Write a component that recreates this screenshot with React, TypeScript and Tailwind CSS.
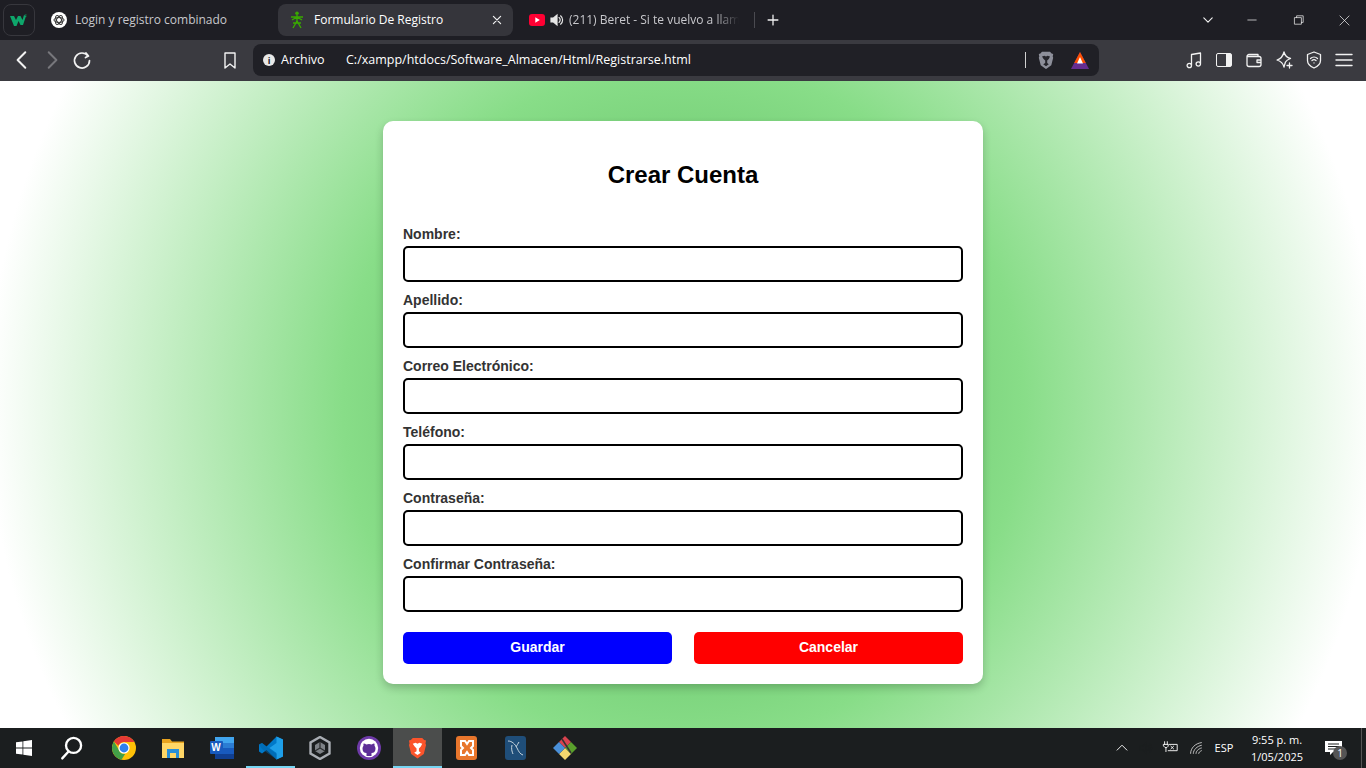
import type { ReactNode } from "react";

const fields = ["Nombre:", "Apellido:", "Correo Electrónico:", "Teléfono:", "Contraseña:", "Confirmar Contraseña:"];

const uiFont = "font-['Open_Sans','Noto_Sans',sans-serif]";
const pageFont = "font-['Liberation_Sans',Arial,sans-serif]";

function Cell({ w, children, className = "" }: { w: string; children?: ReactNode; className?: string }) {
  return <div className={`flex h-full shrink-0 items-center justify-center ${w} ${className}`}>{children}</div>;
}

function Line({ d, size = 20, color = "#f2f2f2", width = 1.6 }: { d: string; size?: number; color?: string; width?: number }) {
  return (
    <svg width={size} height={size} viewBox="0 0 20 20" fill="none" stroke={color} strokeWidth={width} strokeLinecap="round" strokeLinejoin="round">
      <path d={d} />
    </svg>
  );
}

function W3Logo() {
  return (
    <svg width="18" height="14" viewBox="0 0 18 14">
      <path d="M0 3h4l2 4 2-4h2.5l2 4 1.5-5 2 1-3 9h-2.5L8.5 8l-2 5H4z" fill="#0ea66b" />
      <text x="14.5" y="4" fontSize="4" fill="#0ea66b">3</text>
    </svg>
  );
}

function GptLogo() {
  return (
    <svg width="16" height="16" viewBox="0 0 16 16">
      <circle cx="8" cy="8" r="8" fill="#fff" />
      <g fill="none" stroke="#333" strokeWidth="1">
        <ellipse cx="8" cy="8" rx="5" ry="2.4" />
        <ellipse cx="8" cy="8" rx="5" ry="2.4" transform="rotate(60 8 8)" />
        <ellipse cx="8" cy="8" rx="5" ry="2.4" transform="rotate(120 8 8)" />
      </g>
    </svg>
  );
}

function SenaLogo() {
  return (
    <svg width="14" height="18" viewBox="0 0 14 18" fill="none" stroke="#39a900" strokeWidth="1.4">
      <circle cx="7" cy="2.2" r="1.8" fill="#39a900" stroke="none" />
      <path d="M1 6h12M7 4v6M2 9l5-3 5 3M7 10l-4 7M7 10l4 7M3 12h8" />
    </svg>
  );
}

function YouTube() {
  return (
    <svg width="16" height="12" viewBox="0 0 16 12">
      <rect width="16" height="12" rx="3" fill="#ff0033" />
      <path d="M6.3 3.3v5.4L10.8 6z" fill="#fff" />
    </svg>
  );
}

function Speaker({ color = "#e6e6e6" }: { color?: string }) {
  return (
    <svg width="14" height="14" viewBox="0 0 14 14" fill="none" stroke={color} strokeWidth="1.2" strokeLinecap="round">
      <path d="M1 5h2.5L7 2v10L3.5 9H1z" fill={color} />
      <path d="M9 4.6a3 3 0 0 1 0 4.8M10.6 2.8a5.4 5.4 0 0 1 0 8.4" />
    </svg>
  );
}

function BraveLion({ size = 16, mono = false }: { size?: number; mono?: boolean }) {
  const body = mono ? "#8d8f9a" : "#fb542b";
  const detail = mono ? "#25252b" : "#ffffff";
  return (
    <svg width={size} height={size * 1.15} viewBox="0 0 20 23">
      <path d="M5 1h10l2 2.2 2 .6-.6 3 .6 1.7-2.4 9.3L10 22.6 3.400 17.800 1 8.500l.6-1.700-.6-3 2-.6z" fill={body} />
      <path d="M5 7l3-1 2 1 2-1 3 1-1.500 3-2 2v3l2 1.500-3.500 2.500-3.500-2.500L9 15v-3l-2-2z" fill={detail} />
    </svg>
  );
}

function BatTriangle() {
  return (
    <svg width="18" height="17" viewBox="0 0 18 17">
      <path d="M9 0l9 17H0z" fill="#662d91" />
      <path d="M9 0l5.800 11H3.200z" fill="#ff5000" />
      <path d="M9 5l3 6.500H6z" fill="#fff" />
    </svg>
  );
}

function ChromeLogo() {
  return (
    <svg width="24" height="24" viewBox="0 0 24 24">
      <circle cx="12" cy="12" r="12" fill="#ffc107" />
      <path d="M12 0a12 12 0 0 1 10.400 6H12a6 6 0 0 0-5.600 3.800L1.900 5.500A12 12 0 0 1 12 0z" fill="#e53935" />
      <path d="M1.900 5.500l5 8.500a6 6 0 0 0 6.200 3.900L9.500 23.700A12 12 0 0 1 1.900 5.500z" fill="#43a047" />
      <circle cx="12" cy="12" r="5.600" fill="#fff" />
      <circle cx="12" cy="12" r="4.400" fill="#2f80ed" />
    </svg>
  );
}

function FolderIcon() {
  return (
    <svg width="22" height="20" viewBox="0 0 22 20">
      <path d="M0 1h8l2 2.500h12V6H0z" fill="#e8a31f" />
      <path d="M0 5h22v15H0z" fill="#ffd666" />
      <path d="M5 11h12v9h-3v-5H8v5H5z" fill="#2a8fd8" />
    </svg>
  );
}

function WordIcon() {
  return (
    <div className={`relative h-[22px] w-[24px] ${pageFont}`}>
      <div className="ml-[5px] flex h-full w-[19px] flex-col">
        <div className="h-1/4 bg-[#41a5ee]" />
        <div className="h-1/4 bg-[#2b7cd3]" />
        <div className="h-1/4 bg-[#185abd]" />
        <div className="h-1/4 bg-[#103f91]" />
      </div>
      <div className="absolute top-[4px] left-0 flex h-[13px] w-[13px] items-center justify-center rounded-[1px] bg-[#185abd] text-[10px] font-bold text-white">W</div>
    </div>
  );
}

function VsCode() {
  return (
    <svg width="24" height="24" viewBox="0 0 24 24">
      <path d="M17.500 0.500L24 3.500v17l-6.500 3-10-9.500-4.500 3.500L0 15.500V8.500L3 7l4.500 3.500z" fill="#0078c8" />
      <path d="M17.500.5L24 3.500v17l-6.500 3zM17.500 7L10.500 12l7 5z" fill="#1e9fe8" />
      <path d="M0 8.500L3 7l14.500 11v5.500L3 13z" fill="#0065a9" opacity=".55" />
    </svg>
  );
}

function UnityIcon() {
  return (
    <svg width="22" height="24" viewBox="0 0 22 24" fill="none">
      <path d="M11 1l9.500 5.500v11L11 23l-9.500-5.500v-11z" stroke="#a9adb3" strokeWidth="2.400" />
      <path d="M11 6l5 3v6l-5 3-5-3V9z" fill="#7d8186" />
      <path d="M11 12V6M11 12l5 3M11 12l-5 3" stroke="#2a2c2d" strokeWidth="1.200" />
    </svg>
  );
}

function GithubIcon() {
  return (
    <svg width="24" height="24" viewBox="0 0 24 24">
      <circle cx="12" cy="12" r="12" fill="#6e3aa8" />
      <circle cx="12" cy="12" r="9.200" fill="#fff" />
      <path d="M9.500 20v-3c-2.500 0-4-1.500-4-4.500 0-1 .4-2 1-2.700-.2-.8-.1-1.700.2-2.300 1 0 1.800.5 2.500 1a8 8 0 0 1 5.600 0c.7-.5 1.500-1 2.500-1 .3.600.4 1.500.2 2.300.6.700 1 1.700 1 2.700 0 3-1.500 4.500-4 4.500v3z" fill="#5d2e97" />
    </svg>
  );
}

function XamppIcon() {
  return (
    <div className="flex h-[24px] w-[21px] items-center justify-center rounded-[3px] bg-[#e8762c]">
      <svg width="16" height="18" viewBox="0 0 16 18" fill="none" stroke="#fff" strokeWidth="2">
        <path d="M2 2h4l2 3 2-3h4v5l-2 2 2 2v5h-4l-2-3-2 3H2v-5l2-2-2-2z" />
      </svg>
    </div>
  );
}

function MysqlIcon() {
  return (
    <div className="flex h-[24px] w-[21px] items-center justify-center rounded-[3px] bg-[#1f4e79]">
      <svg width="17" height="18" viewBox="0 0 17 18" fill="none" stroke="#c6d4de" strokeWidth="1">
        <path d="M1 2c4 0 7 3 9 7s3 6 6 7M9 8c1-2 2-3 3-5M5 6c-1 3 0 7 1 9" />
      </svg>
    </div>
  );
}

function GitIcon() {
  return (
    <svg width="24" height="24" viewBox="0 0 24 24">
      <path d="M12 0l6 6-6 6-6-6z" fill="#d9434e" />
      <path d="M18 6l6 6-6 6-6-6z" fill="#5aa02c" />
      <path d="M12 12l6 6-6 6-6-6z" fill="#f5d76e" />
      <path d="M6 6l6 6-6 6-6-6z" fill="#4a90d9" />
      <path d="M9 3l9 14" stroke="#333" strokeWidth="1.500" />
    </svg>
  );
}

function WindowsIcon() {
  return (
    <svg width="16" height="16" viewBox="0 0 16 16" fill="#fff">
      <path d="M0 2.300l6.500-.9v6.200H0zM7.300 1.300L16 0v7.600H7.300zM0 8.400h6.500v6.200L0 13.700zM7.300 8.400H16V16l-8.700-1.300z" />
    </svg>
  );
}

function TabBar() {
  return (
    <div className={`flex h-10 items-center bg-[#1e1e24] text-[12px] ${uiFont}`}>
      <Cell w="w-[3px]" />
      <div className="flex h-8 w-8 items-center justify-center rounded-lg border border-[#37373d]">
        <W3Logo />
      </div>
      <Cell w="w-[16px]" />
      <GptLogo />
      <div className="ml-2 w-[203px] text-[#c8c8cc]">Login y registro combinado</div>
      <div className="flex h-8 w-[235px] items-center rounded-lg bg-[#35353b] pl-3 pr-[10px]">
        <Cell w="w-[14px]"><SenaLogo /></Cell>
        <span className="ml-[10px] flex-1 text-white">Formulario De Registro</span>
        <Line size={12} width={2} d="M4 4l12 12M16 4L4 16" />
      </div>
      <div className="ml-4 flex items-center">
        <YouTube />
        <div className="ml-[5px]"><Speaker /></div>
        <div className="ml-[5px] w-[170px] overflow-hidden whitespace-nowrap text-[#c8c8cc] [mask-image:linear-gradient(to_right,black_85%,transparent)]">(211) Beret - Si te vuelvo a llamar</div>
      </div>
      <div className="ml-[15px] h-4 w-px bg-[#4a4a50]" />
      <Cell w="w-[36px]"><Line size={14} width={1.8} d="M10 3v14M3 10h14" /></Cell>
      <div className="flex-1" />
      <Cell w="w-[40px]"><Line size={14} width={1.6} d="M4 7l6 6 6-6" /></Cell>
      <Cell w="w-[47px]"><Line size={12} width={1.2} d="M3 10h14" /></Cell>
      <Cell w="w-[47px]"><Line size={12} width={1.2} d="M3 6h11v11H3zM6 6V3h11v11h-3" /></Cell>
      <Cell w="w-[44px]"><Line size={13} width={1.1} d="M3 3l14 14M17 3L3 17" /></Cell>
    </div>
  );
}

function Toolbar() {
  return (
    <div className={`flex h-[41px] items-center bg-[#3a3a40] pb-px ${uiFont}`}>
      <Cell w="w-[7px]" />
      <Cell w="w-[30px]"><Line size={22} width={1.8} d="M13 3l-7 7 7 7" /></Cell>
      <Cell w="w-[30px]"><Line size={22} width={1.8} color="#77777c" d="M7 3l7 7-7 7" /></Cell>
      <Cell w="w-[30px]"><Line size={20} width={1.7} d="M16 6a7.500 7.500 0 1 0 1.500 4.500M14 3l2.500 3-3 1.500" /></Cell>
      <Cell w="w-[118px]" />
      <Cell w="w-[30px]"><Line size={20} width={1.4} d="M5 3h10v15l-5-4-5 4z" /></Cell>
      <div className="ml-[8px] flex h-8 w-[846px] items-center rounded-lg bg-[#202026] pl-[10px] text-[12.500px] text-white">
        <div className="flex h-[12px] w-[12px] items-center justify-center rounded-full bg-[#e8e8e8] text-[9px] leading-none font-bold text-[#202026]">i</div>
        <span className="ml-[6px] w-[65px]">Archivo</span>
        <span className="w-[679px] whitespace-nowrap">C:/xampp/htdocs/Software_Almacen/Html/Registrarse.html</span>
        <div className="h-4 w-px bg-[#d0d0d0]" />
        <Cell w="w-[39px]"><BraveLion mono /></Cell>
        <Cell w="w-[29px]"><BatTriangle /></Cell>
      </div>
      <div className="flex-1" />
      <Cell w="w-[30px]"><Line width={1.3} d="M7.500 15V4.500L16.500 3v10.500M7.500 15.500a2.200 2.200 0 1 1-4.400 0 2.200 2.200 0 0 1 4.400 0zM16.500 14a2.200 2.200 0 1 1-4.400 0 2.200 2.200 0 0 1 4.400 0z" /></Cell>
      <Cell w="w-[30px]">
        <div className="flex h-[14px] w-[16px] justify-end rounded-[2px] border border-[#f2f2f2]"><div className="w-[5px] bg-[#f2f2f2]" /></div>
      </Cell>
      <Cell w="w-[30px]"><Line width={1.3} d="M3 6.500A2 2 0 0 1 5 4.500h9v2M3 6.500v8a2 2 0 0 0 2 2h10a2 2 0 0 0 2-2v-6a2 2 0 0 0-2-2H3zM17 10h-4v2.500h4" /></Cell>
      <Cell w="w-[30px]"><Line width={1.3} d="M10 2c1 4 2.500 5.500 6.500 6.500-3 1-4 1.500-5 3.500-.5 1.500-1 3-1.500 5-1-4-2.500-5.500-7-7 4.500-1.500 6-3.500 7-8zM15.500 13v5M13 15.500h5" /></Cell>
      <Cell w="w-[30px]"><Line width={1.3} d="M10 2l6.500 2.500v6c0 3.500-3 6-6.500 7.500-3.500-1.500-6.500-4-6.500-7.500v-6zM6.500 8.500a5 5 0 0 1 7 0M8 10.500a3 3 0 0 1 4 0M10 12.800v.1" /></Cell>
      <Cell w="w-[30px]"><Line size={20} width={1.4} d="M2 4.500h16M2 10h16M2 15.500h16" /></Cell>
      <Cell w="w-[7px]" />
    </div>
  );
}

function RegisterForm() {
  return (
    <form className={`flex w-[600px] flex-col rounded-[10px] bg-white px-5 pt-10 pb-5 shadow-[0_4px_8px_rgba(0,0,0,0.2)] ${pageFont}`}>
      <h2 className="mb-[38px] text-center text-[24px] leading-[27px] font-bold text-black">Crear Cuenta</h2>
      {fields.map((label) => (
        <div key={label} className="mb-[10px]">
          <label className="mb-1 block text-[14px] leading-4 font-bold text-[#333]">{label}</label>
          <input type="text" className="box-border block h-9 w-full rounded-[5px] border-2 border-black bg-white" />
        </div>
      ))}
      <div className="mt-[10px] flex justify-between">
        <button type="button" className="h-8 w-[269px] rounded-[5px] bg-[#0000ff] text-[14px] font-bold text-white">Guardar</button>
        <button type="button" className="h-8 w-[269px] rounded-[5px] bg-[#ff0000] text-[14px] font-bold text-white">Cancelar</button>
      </div>
    </form>
  );
}

function Taskbar() {
  const apps = [<ChromeLogo />, <FolderIcon />, <WordIcon />, <VsCode />, <UnityIcon />, <GithubIcon />, <BraveLion size={19} />, <XamppIcon />, <MysqlIcon />, <GitIcon />];
  return (
    <div className={`flex h-10 items-center bg-[#1b1e1f] text-white ${uiFont}`}>
      <Cell w="w-[48px]"><WindowsIcon /></Cell>
      <Cell w="w-[48px]"><Line size={26} width={1.8} color="#fff" d="M7.500 12.500l-5 5.500M17 8a5.800 5.800 0 1 1-11.600 0A5.800 5.800 0 0 1 17 8z" /></Cell>
      <Cell w="w-[3px]" />
      {apps.map((icon, i) => (
        <Cell key={i} w="w-[49px]" className={`relative ${i === 6 ? "bg-[#4b4d4c]" : ""}`}>
          {icon}
          {(i === 3 || i === 6) && <div className="absolute inset-x-0 bottom-0 h-[2px] bg-[#76d5f2]" />}
        </Cell>
      ))}
      <div className="flex-1" />
      <Cell w="w-[24px]"><Line size={14} width={1.3} color="#fff" d="M3 13l7-7 7 7" /></Cell>
      <Cell w="w-[24px]"><Speaker color="#1b1e1f" /></Cell>
      <Cell w="w-[24px]"><Line size={18} width={1} color="#fff" d="M4 3v3M7 3v3M3 6h5v2l-1.500 1.500h-2L3 8zM5.500 9.500V14M9 6h9v7H8M11 8l3 3M14 8l-3 3" /></Cell>
      <Cell w="w-[28px]"><Line size={18} width={1} color="#cfcfcf" d="M4 16c0-6 5-11 12-12M7 16c0-4 4-8 9-9M10 16c0-2 2-5 6-6M13 16c0-1 1-2 3-3" /></Cell>
      <Cell w="w-[28px]" className="text-[11px]">ESP</Cell>
      <Cell w="w-[78px]">
        <div className="text-center text-[11px] leading-[17px]">
          <div>9:55 p. m.</div>
          <div>1/05/2025</div>
        </div>
      </Cell>
      <Cell w="w-[34px]" className="relative">
        <svg width="17" height="15" viewBox="0 0 17 15">
          <path d="M0 0h17v11H8l-3 3v-3H0z" fill="#fff" />
          <path d="M3 3h11M3 5.500h11M3 8h7" stroke="#1b1e1f" strokeWidth="1" />
        </svg>
        <div className="absolute top-[18px] left-[17px] flex h-[14px] w-[14px] items-center justify-center rounded-full bg-[#555] text-[10px] leading-none">1</div>
      </Cell>
      <Cell w="w-[11px]" />
      <div className="h-full w-px bg-[#555]" />
      <Cell w="w-[4px]" />
    </div>
  );
}

export default function App() {
  return (
    <div className="flex h-screen w-full flex-col overflow-hidden">
      <TabBar />
      <Toolbar />
      <main className="flex flex-1 items-center justify-center bg-[radial-gradient(circle,#4caf50_0%,#88dd88_45%,#ffffff_92%)] pb-[5px]">
        <RegisterForm />
      </main>
      <Taskbar />
    </div>
  );
}
